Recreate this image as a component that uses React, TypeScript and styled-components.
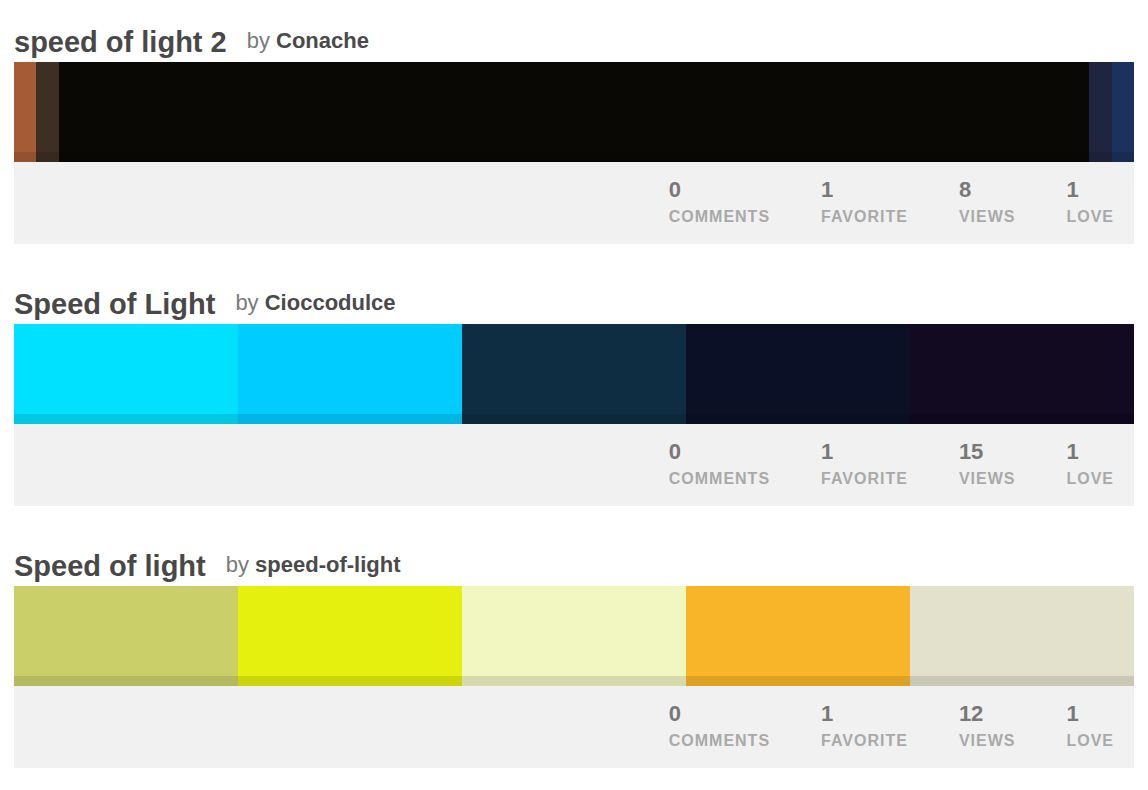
import React from "react";
import styled, { createGlobalStyle } from "styled-components";

const GlobalStyle = createGlobalStyle`
  html, body { margin: 0; padding: 0; background: #ffffff; }
  body { font-family: "Liberation Sans", Arial, Helvetica, sans-serif; }
`;

const Page = styled.div`
  display: flex;
  flex-direction: column;
  gap: 43px;
  padding: 25px 14px 20px;
`;

const Palette = styled.section`
  display: flex;
  flex-direction: column;
`;

const Header = styled.header`
  display: flex;
  align-items: flex-end;
  margin-bottom: 3px;
`;

const Title = styled.h2`
  margin: 0;
  font-size: 29px;
  line-height: 34px;
  font-weight: 700;
  color: #484848;
`;

const Byline = styled.span`
  margin: 0 0 5px 20px;
  font-size: 22px;
  line-height: 26px;
  color: #7a7a7a;
`;

const Author = styled.b`
  color: #4a4a4a;
  font-weight: 700;
`;

const Card = styled.div`
  display: flex;
  flex-direction: column;
`;

const Swatches = styled.div`
  display: flex;
  height: 100px;
`;

const Swatch = styled.div<{ $color: string; $grow: number }>`
  flex: ${(p) => p.$grow} 1 0;
  background: ${(p) => p.$color};
  box-shadow: inset 0 -10px 0 rgba(0, 0, 0, 0.11);
`;

const Stats = styled.div`
  display: flex;
  justify-content: flex-end;
  gap: 51px;
  background: #f1f1f1;
  padding: 16px 20px 18px 0;
`;

const Stat = styled.div`
  display: flex;
  flex-direction: column;
  gap: 6px;
`;

const Num = styled.span`
  font-size: 22px;
  line-height: 24px;
  font-weight: 700;
  color: #787878;
`;

const Label = styled.span`
  font-size: 16px;
  line-height: 18px;
  font-weight: 700;
  letter-spacing: 1px;
  color: #a9a9a9;
  text-transform: uppercase;
`;

type Item = {
  title: string;
  author: string;
  colors: [string, number][];
  views: number;
};

const items: Item[] = [
  {
    title: "speed of light 2",
    author: "Conache",
    colors: [
      ["#a55b36", 2],
      ["#3e2f25", 2],
      ["#0a0804", 92],
      ["#20253f", 2],
      ["#1c325e", 2],
    ],
    views: 8,
  },
  {
    title: "Speed of Light",
    author: "Cioccodulce",
    colors: [
      ["#00e1ff", 1],
      ["#00ccff", 1],
      ["#0f2d42", 1],
      ["#0c1026", 1],
      ["#110a20", 1],
    ],
    views: 15,
  },
  {
    title: "Speed of light",
    author: "speed-of-light",
    colors: [
      ["#cbcf6a", 1],
      ["#e6f00e", 1],
      ["#f2f6c1", 1],
      ["#f8b52a", 1],
      ["#e3e1cc", 1],
    ],
    views: 12,
  },
];

export default function App() {
  return (
    <>
      <GlobalStyle />
      <Page>
        {items.map((it) => (
          <Palette key={it.author}>
            <Header>
              <Title>{it.title}</Title>
              <Byline>
                by <Author>{it.author}</Author>
              </Byline>
            </Header>
            <Card>
              <Swatches>
                {it.colors.map(([c, g], i) => (
                  <Swatch key={i} $color={c} $grow={g} />
                ))}
              </Swatches>
              <Stats>
                <Stat>
                  <Num>0</Num>
                  <Label>Comments</Label>
                </Stat>
                <Stat>
                  <Num>1</Num>
                  <Label>Favorite</Label>
                </Stat>
                <Stat>
                  <Num>{it.views}</Num>
                  <Label>Views</Label>
                </Stat>
                <Stat>
                  <Num>1</Num>
                  <Label>Love</Label>
                </Stat>
              </Stats>
            </Card>
          </Palette>
        ))}
      </Page>
    </>
  );
}
